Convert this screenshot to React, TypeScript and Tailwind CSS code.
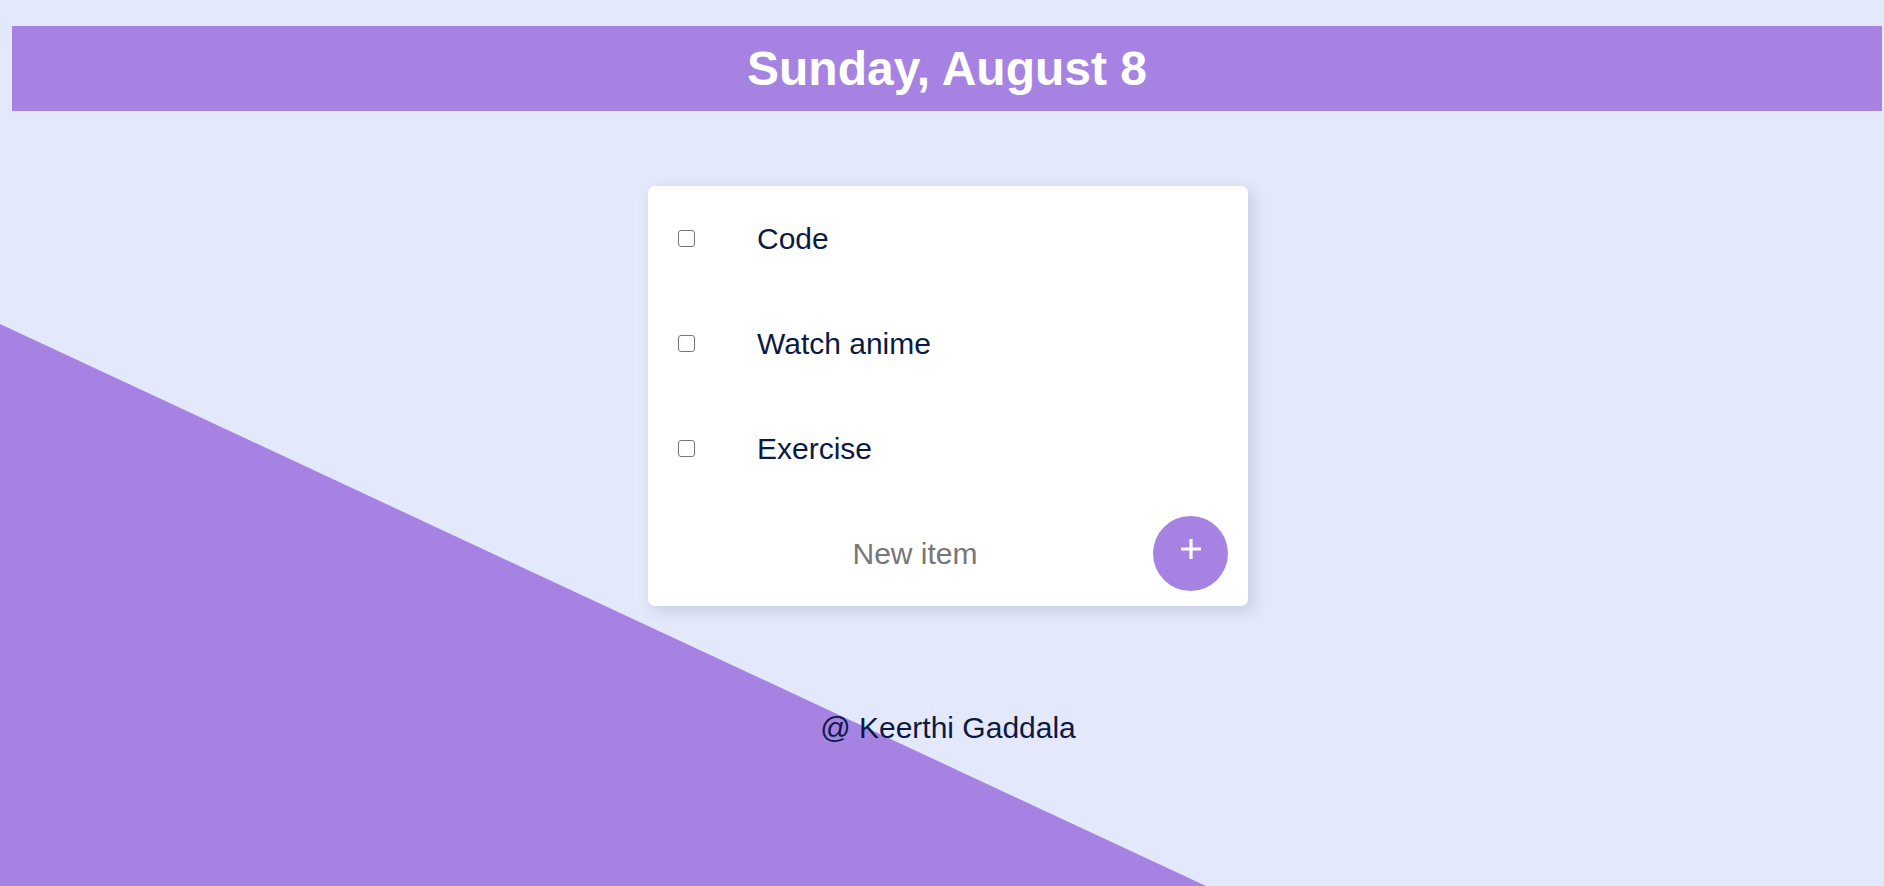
import React from "react";

function Checkbox() {
  return (
    <span className="block h-[17px] w-[17px] shrink-0 rounded-[3px] border-[1.5px] border-[#767676] bg-white" />
  );
}

export default function App() {
  const items = ["Code", "Watch anime", "Exercise"];
  return (
    <div
      className="relative min-h-[886px] w-full overflow-hidden bg-[#e3e8fb]"
      style={{ fontFamily: '"Liberation Sans", Arial, sans-serif' }}
    >
      <div className="absolute inset-0 bg-[#a683e3] [clip-path:polygon(0_324px,1206px_886px,0_886px)]" />
      <div className="relative pt-[26px] pl-[12px]">
        <header className="mr-[2px] flex h-[85px] items-center justify-center bg-[#a683e3]">
          <h1 className="text-[48px] font-bold leading-[55px] text-white">Sunday, August 8</h1>
        </header>

        <div className="mx-auto mt-[75px] flex w-[600px] flex-col rounded-[7px] bg-white shadow-[5px_5px_15px_rgba(70,80,130,0.18)]">
          {items.map((it) => (
            <div key={it} className="flex h-[105px] items-center pl-[30px]">
              <Checkbox />
              <span className="ml-[62px] text-[30px] leading-[34px] text-[#0b1a45]">{it}</span>
            </div>
          ))}
          <div className="flex h-[105px] items-center pl-[30px] pr-[20px]">
            <input
              className="w-[474px] bg-transparent text-center text-[30px] leading-[34px] text-[#0b1a45] outline-none placeholder:text-[#777777]"
              placeholder="New item"
              style={{ fontFamily: '"Liberation Sans", Arial, sans-serif' }}
            />
            <button className="ml-auto flex h-[75px] w-[75px] items-center justify-center rounded-full bg-[#a683e3]">
              <svg width="22" height="22" viewBox="0 0 22 22" className="mb-[9px]">
                <path d="M11 1v20M1 11h20" stroke="white" strokeWidth="3.2" />
              </svg>
            </button>
          </div>
        </div>

        <footer className="mt-[105px] text-center text-[30px] leading-[34px] text-[#0b1a45]">
          @ Keerthi Gaddala
        </footer>
      </div>
    </div>
  );
}
